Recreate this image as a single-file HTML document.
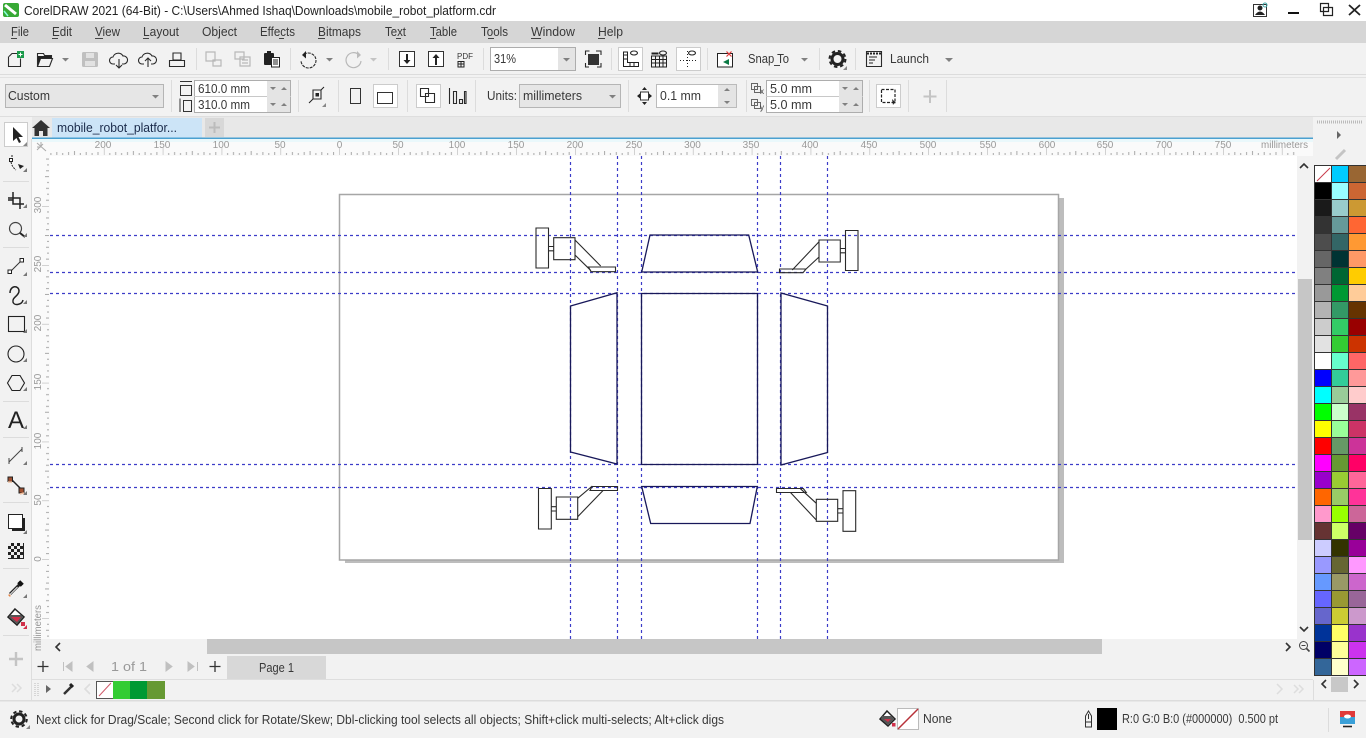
<!DOCTYPE html>
<html><head><meta charset="utf-8"><title>CorelDRAW 2021</title>
<style>
html,body{margin:0;padding:0;background:#f2f2f2;overflow:hidden}
svg{display:block}
text{font-family:"Liberation Sans",sans-serif;font-size:12.5px;fill:#383838}
.r{font-size:10px;fill:#999}
.l{fill:none;stroke:#2a2a2a;stroke-width:1.1}
.g{fill:none;stroke:#b8b8b8;stroke-width:1.2}
.d{fill:none;stroke:#2a2a2a;stroke-width:1.1}
.n{fill:none;stroke:#18185a;stroke-width:1.3}
.h{fill:none;stroke:#3c3cc8;stroke-width:1.2;stroke-dasharray:3 3}
.c{fill:#808080}
.ch{fill:none;stroke:#333;stroke-width:1.6}
.sep{stroke:#dcdcdc;stroke-width:1}
</style></head><body>
<svg width="1366" height="738" viewBox="0 0 1366 738" xmlns="http://www.w3.org/2000/svg">
<defs>
<pattern id="tt" x="339.5" y="139" width="58.9" height="17" patternUnits="userSpaceOnUse">
<path d="M0 9v7M5.900 14v2M11.800 13v3M17.700 14v2M23.600 13v3M29.500 12v4M35.300 14v2M41.200 13v3M47.100 14v2M53 13v3" stroke="#a8a8a8" stroke-width="1" fill="none"/>
</pattern>
<pattern id="lt" x="33" y="559.5" width="17" height="58.9" patternUnits="userSpaceOnUse">
<path d="M9 0h7M14 5.900h2M13 11.800h3M14 17.700h2M13 23.600h3M12 29.500h4M14 35.300h2M13 41.200h3M14 47.100h2M13 53h3" stroke="#a8a8a8" stroke-width="1" fill="none"/>
</pattern>
</defs>
<rect width="1366" height="738" fill="#f2f2f2"/>
<!-- title bar -->
<rect width="1366" height="21" fill="#fff"/>
<rect x="3" y="3" width="16" height="14" rx="2" fill="#37a935"/>
<path d="M5 5l11 9" stroke="#fff" stroke-width="3"/><path d="M4 11l4 5" stroke="#8fd" stroke-width="1.500"/>
<text x="24" y="15" textLength="472" lengthAdjust="spacingAndGlyphs" style="fill:#222">CorelDRAW 2021 (64-Bit) - C:\Users\Ahmed Ishaq\Downloads\mobile_robot_platform.cdr</text>
<rect x="1253.500" y="4.500" width="13" height="12" fill="none" stroke="#333"/><circle cx="1260" cy="8" r="2.500" fill="#222"/><path d="M1255 15q5-7 10 0z" fill="#222"/><circle cx="1265" cy="5" r="2" fill="none" stroke="#4aa"/>
<rect x="1288" y="12" width="11" height="2" fill="#111"/>
<path d="M1320.500 3.500h8v8h-8zM1323.500 7.500h9v8h-9z" fill="#fff" stroke="#222" stroke-width="1.200"/>
<path d="M1349 5l11 10M1360 5l-11 10" stroke="#222" stroke-width="1.800"/>
<!-- menu -->
<rect y="21" width="1366" height="22" fill="#d6d6d6"/>
<text x="11" y="36" textLength="18" lengthAdjust="spacingAndGlyphs">File</text><text x="52" y="36" textLength="20" lengthAdjust="spacingAndGlyphs">Edit</text><text x="95" y="36" textLength="25" lengthAdjust="spacingAndGlyphs">View</text><text x="143" y="36" textLength="36" lengthAdjust="spacingAndGlyphs">Layout</text><text x="202" y="36" textLength="35" lengthAdjust="spacingAndGlyphs">Object</text><text x="260" y="36" textLength="35" lengthAdjust="spacingAndGlyphs">Effects</text><text x="318" y="36" textLength="43" lengthAdjust="spacingAndGlyphs">Bitmaps</text><text x="385" y="36" textLength="21" lengthAdjust="spacingAndGlyphs">Text</text><text x="430" y="36" textLength="27" lengthAdjust="spacingAndGlyphs">Table</text><text x="481" y="36" textLength="27" lengthAdjust="spacingAndGlyphs">Tools</text><text x="531" y="36" textLength="44" lengthAdjust="spacingAndGlyphs">Window</text><text x="598" y="36" textLength="25" lengthAdjust="spacingAndGlyphs">Help</text>
<path d="M11 38.500h6M52 38.500h6M95 38.500h8M143 38.500h6M279 38.500h5M318 38.500h7M396 38.500h5M430 38.500h6M488 38.500h6M531 38.500h10M598 38.500h7" stroke="#444"/>
<!-- toolbar 1 -->
<rect y="74" width="1366" height="1" fill="#dcdcdc"/><rect y="77" width="1366" height="1" fill="#e2e2e2"/>
<path class="l" d="M9 56.500l3-3h7M8.500 56.500v10h12v-8"/><rect x="17" y="51" width="7" height="7" fill="#1a9a4a"/><path d="M20.500 52.500v4M18.500 54.500h4" stroke="#fff"/>
<path class="l" d="M37.500 66.500v-13h6l1 2h7v3M37.500 66.500h12l3-8h-12l-3 8z"/><path d="M38 56h13v2H41l-3 7z" fill="#222"/>
<path class="c" d="M62 58h7l-3.500 3.500z"/>
<rect x="82" y="52" width="16" height="15" rx="1.500" fill="#c0c0c0"/><rect x="86" y="53" width="8" height="5" fill="#e2e2e2"/><rect x="85" y="61" width="10" height="5" fill="#e2e2e2"/>
<path class="l" d="M115 64h-2a3.500 3.500 0 0 1 0-7 5.500 5.500 0 0 1 10-1 4 4 0 0 1 1 8h-2M119 59v9M116 65l3 3 3-3"/>
<path class="l" d="M144 64h-2a3.500 3.500 0 0 1 0-7 5.500 5.500 0 0 1 10-1 4 4 0 0 1 1 8h-2M148 67v-9M145 61l3-3 3 3"/>
<path class="l" d="M173 60v-7h8v7M169.500 66.500v-6h15v6z"/><path d="M173 60h8" stroke="#222"/>
<path class="sep" d="M196.500 48v22M290.500 48v22M388.500 48v22M483.500 48v22M611.500 48v22M707.500 48v22M819.500 48v22M855.500 48v22"/>
<path class="g" d="M206 52h9v9h-9zM213 60h8v6h-8z"/>
<path class="g" d="M235 52h9v7h-9zM240 57h10v9h-10zM242 60h6M242 63h6"/>
<rect x="264" y="53" width="10" height="12" rx="1" fill="#222"/><rect x="267" y="51" width="4" height="3" fill="#222"/><path d="M271.500 57.500h8v9.500h-8z" fill="#fff" stroke="#222"/><path d="M273 60h5M273 62h5M273 64h5" stroke="#222"/>
<path class="l" d="M304 54.500a7.500 7.500 0 1 1-3 6" stroke-dasharray="3 1"/><path d="M306 51l-4 4 4 3.500z" fill="#222"/>
<path class="c" d="M326 58h7l-3.500 3.500z"/>
<path class="g" d="M359 55a7.500 7.500 0 1 0 2 6"/><path d="M357 51l4 4-4 3.500z" fill="#bbb"/>
<path d="M370 58h7l-3.500 3.500z" fill="#c4c4c4"/>
<rect x="399.500" y="51.500" width="15" height="15" fill="#fff" stroke="#333"/><path d="M407 54v8" stroke="#222" stroke-width="2"/><path d="M403.500 60h7l-3.500 4z" fill="#222"/>
<rect x="428.500" y="51.500" width="15" height="15" fill="#fff" stroke="#333"/><path d="M436 57v8" stroke="#222" stroke-width="2"/><path d="M432.500 58h7l-3.500-4z" fill="#222"/>
<text x="457" y="59" textLength="16" lengthAdjust="spacingAndGlyphs" style="font-size:8.500px">PDF</text><path d="M458 61.500h6v5.500h-6zM461 61.500v5.500M458 64h6" stroke="#222" fill="none"/>
<rect x="490.500" y="47.500" width="85" height="23" fill="#fff" stroke="#adadad"/><rect x="558" y="48" width="17" height="22" fill="#e4e4e4"/>
<text x="494" y="63" textLength="22" lengthAdjust="spacingAndGlyphs">31%</text><path class="c" d="M563 58h7l-3.500 3.500z"/>
<rect x="588" y="54" width="11" height="11" fill="#333"/><path class="d" d="M585.500 55v-4h4M596 51h5v4M601 63v4h-4M589 67h-3.500v-4"/>
<rect x="618.500" y="47.500" width="24" height="23" fill="#fff" stroke="#ccc"/><path d="M623.500 52v14.500h15v-4h-11V52zM624 59h3M624 55h3M630 63v3M634 63v3" fill="none" stroke="#222"/><ellipse cx="634" cy="53" rx="3.500" ry="2" class="d"/>
<path d="M651.500 56h15v11h-15zM655.500 56v11M659.500 56v11M663 56v11M651.500 59.500h15M651.500 63h15" fill="none" stroke="#222"/><ellipse cx="663" cy="53" rx="3.500" ry="2" class="d"/><path d="M651.500 53.500h7" stroke="#222" stroke-width="2"/>
<rect x="676.500" y="47.500" width="24" height="23" fill="#fff" stroke="#ccc"/><path d="M680 60.500h17M687.500 51v17" stroke="#222" stroke-dasharray="1 2"/><ellipse cx="692" cy="53" rx="3.500" ry="2" class="d"/>
<path d="M717.500 53.500h15v13.500h-15z" fill="#fff" stroke="#222"/><path d="M729 59l-6 3 6 3z" fill="#0c7a45"/><path d="M726.500 51.500l5 5M731.500 51.500l-5 5" stroke="#e03c3c" stroke-width="1.200"/>
<text x="748" y="63" textLength="41" lengthAdjust="spacingAndGlyphs">Snap To</text><path d="M774 65.500h6" stroke="#444"/>
<path class="c" d="M801 58h7l-3.500 3.500z"/>
<circle cx="837.500" cy="59" r="5.500" fill="none" stroke="#222" stroke-width="3"/><circle cx="837.500" cy="59" r="8" fill="none" stroke="#222" stroke-width="2" stroke-dasharray="3.500 2.800"/><path d="M843 70l4-4v4z" fill="#888"/>
<path class="l" d="M866.500 51.500h15v15h-15z"/><path d="M867 53.500h14" stroke="#222" stroke-width="2" stroke-dasharray="2 1"/><path d="M869 57h8M869 60h6M869 63h4" stroke="#222"/>
<text x="890" y="63" textLength="39" lengthAdjust="spacingAndGlyphs">Launch</text>
<path class="c" d="M945 58h8l-4 4z"/>
<!-- toolbar 2 -->
<rect x="5.500" y="84.500" width="158" height="23" fill="#e6e6e6" stroke="#b5b5b5"/><text x="8" y="100" textLength="42" lengthAdjust="spacingAndGlyphs">Custom</text><path class="c" d="M152 95h7l-3.500 3.500z"/>
<path class="sep" d="M171.500 80v32M298.500 80v32M338.500 80v32M407.500 80v32M475.500 80v32M628.500 80v32M746.500 80v32M869.500 80v32M908.500 80v32M946.500 80v32"/>
<path d="M180 81.500h12M180.500 85.500h11v10h-11zM180 98.500v13.500M183.500 100.500h8v11h-8z" fill="none" stroke="#333"/>
<rect x="194.500" y="80.500" width="96" height="32" fill="#fff" stroke="#adadad"/><path d="M194 96.500h97" stroke="#c8c8c8"/><rect x="267" y="81" width="23" height="31" fill="#e4e4e4"/>
<text x="198" y="93" textLength="52" lengthAdjust="spacingAndGlyphs">610.0 mm</text><text x="198" y="109" textLength="52" lengthAdjust="spacingAndGlyphs">310.0 mm</text>
<path class="c" d="M270 87h6l-3 3zM281 90h6l-3-3zM270 103h6l-3 3zM281 106h6l-3-3z"/>
<path class="l" d="M313 90h8v9h-8z"/><rect x="315.500" y="93" width="3.500" height="3.500" fill="#222"/><path d="M309 103l4-4M321 90l3-3" stroke="#222"/><path d="M322 107l4-4v4z" fill="#888"/>
<rect x="350.500" y="88.500" width="10" height="15" fill="none" stroke="#333"/>
<rect x="373.500" y="84.500" width="24" height="23" fill="#fff" stroke="#ccc"/><rect x="377.500" y="92.500" width="15" height="11" fill="none" stroke="#333"/>
<rect x="416.500" y="84.500" width="24" height="23" fill="#fff" stroke="#ccc"/><path class="d" d="M420.500 88.500h8v8h-8zM425.500 93.500h9v9h-9z"/>
<path class="d" d="M449.500 88v16M453.500 91.500h3v12h-3zM459.500 99.500h3v4h-3zM464.500 91.500h1.500v12h-1.500z"/>
<text x="487" y="100" textLength="30" lengthAdjust="spacingAndGlyphs">Units:</text>
<rect x="519.500" y="84.500" width="101" height="23" fill="#e6e6e6" stroke="#b5b5b5"/><text x="523" y="100" textLength="59" lengthAdjust="spacingAndGlyphs">millimeters</text><path class="c" d="M609 95h7l-3.500 3.500z"/>
<rect x="640.500" y="92" width="8" height="8" fill="#fff" stroke="#333"/><path d="M644.500 87l2.500 3h-5zM644.500 105l2.500-3h-5zM637 96l3-2.500v5zM652 96l-3-2.500v5z" fill="#222"/>
<rect x="656.500" y="84.500" width="80" height="23" fill="#fff" stroke="#bbb"/><rect x="718" y="85" width="18" height="22" fill="#e4e4e4"/>
<text x="660" y="100" textLength="41" lengthAdjust="spacingAndGlyphs">0.1 mm</text><path class="c" d="M724 91h6l-3-3zM724 101h6l-3 3z"/>
<path d="M751.500 83.500h6v6h-6zM754.500 86.500h6v6h-6zM751.500 99.500h6v6h-6zM754.500 102.500h6v6h-6z" fill="none" stroke="#666"/><text x="760" y="94" style="font-size:8px">x</text><text x="760" y="110" style="font-size:8px">y</text>
<rect x="766.500" y="80.500" width="96" height="32" fill="#fff" stroke="#adadad"/><path d="M766 96.500h97" stroke="#c8c8c8"/><rect x="839" y="81" width="23" height="31" fill="#e4e4e4"/>
<text x="770" y="93" textLength="42" lengthAdjust="spacingAndGlyphs">5.0 mm</text><text x="770" y="109" textLength="42" lengthAdjust="spacingAndGlyphs">5.0 mm</text>
<path class="c" d="M842 87h6l-3 3zM853 90h6l-3-3zM842 103h6l-3 3zM853 106h6l-3-3z"/>
<rect x="876.500" y="84.500" width="24" height="23" fill="#fff" stroke="#ccc"/><path d="M881.500 89.500h13.500v13h-13.500z" fill="none" stroke="#222" stroke-dasharray="3 1.500" stroke-width="1.200"/><path d="M892 99l4 4-2 .5-1 1.500z" fill="#222"/>
<path d="M930 90v13M923.500 96.500h13" stroke="#c4c4c4" stroke-width="2"/>
<!-- tabs -->
<rect x="32" y="117" width="1281" height="21" fill="#e8e8e8"/>
<rect x="0" y="116" width="1366" height="1" fill="#dedede"/>
<rect x="52" y="118" width="150" height="20" fill="#cce4f7"/>
<path d="M41 120l-9 8h2.500v8h4.500v-5h4v5h4.500v-8h2.500z" fill="#333"/>
<text x="57" y="132" textLength="120" lengthAdjust="spacingAndGlyphs" style="fill:#1a2a4a">mobile_robot_platfor...</text>
<rect x="205" y="118" width="19" height="19" fill="#d8d8d8"/><path d="M214.500 122v11M209 127.500h11" stroke="#bcbcbc" stroke-width="2"/>
<rect x="32" y="137.500" width="1281" height="1.500" fill="#4aa0d0"/>
<!-- rulers -->
<rect x="32" y="139" width="1281" height="17" fill="#fafafa"/>
<rect x="32" y="139" width="1281" height="3" fill="#eaf8fb"/>
<rect x="32" y="156" width="18" height="483" fill="#fafafa"/>
<rect x="50" y="139" width="1247" height="17" fill="url(#tt)"/>
<rect x="33" y="156" width="17" height="483" fill="url(#lt)"/>
<path d="M37 143l9 8M37 150l6-6M41 142v4M37 147h4" stroke="#aaa" fill="none"/>
<text class="r" text-anchor="middle" x="103" y="148">200</text><text class="r" text-anchor="middle" x="162" y="148">150</text><text class="r" text-anchor="middle" x="221" y="148">100</text><text class="r" text-anchor="middle" x="280" y="148">50</text><text class="r" text-anchor="middle" x="339.500" y="148">0</text><text class="r" text-anchor="middle" x="398" y="148">50</text><text class="r" text-anchor="middle" x="457" y="148">100</text><text class="r" text-anchor="middle" x="516" y="148">150</text><text class="r" text-anchor="middle" x="575" y="148">200</text><text class="r" text-anchor="middle" x="634" y="148">250</text><text class="r" text-anchor="middle" x="692.500" y="148">300</text><text class="r" text-anchor="middle" x="751" y="148">350</text><text class="r" text-anchor="middle" x="810" y="148">400</text><text class="r" text-anchor="middle" x="869" y="148">450</text><text class="r" text-anchor="middle" x="928" y="148">500</text><text class="r" text-anchor="middle" x="988" y="148">550</text><text class="r" text-anchor="middle" x="1047" y="148">600</text><text class="r" text-anchor="middle" x="1105" y="148">650</text><text class="r" text-anchor="middle" x="1164" y="148">700</text><text class="r" text-anchor="middle" x="1223" y="148">750</text>
<text class="r" x="1261" y="148" textLength="47" lengthAdjust="spacingAndGlyphs">millimeters</text>
<text class="r" text-anchor="middle" transform="translate(41 205) rotate(-90)">300</text><text class="r" text-anchor="middle" transform="translate(41 264) rotate(-90)">250</text><text class="r" text-anchor="middle" transform="translate(41 323) rotate(-90)">200</text><text class="r" text-anchor="middle" transform="translate(41 382) rotate(-90)">150</text><text class="r" text-anchor="middle" transform="translate(41 441) rotate(-90)">100</text><text class="r" text-anchor="middle" transform="translate(41 500) rotate(-90)">50</text><text class="r" text-anchor="middle" transform="translate(41 559) rotate(-90)">0</text>
<text class="r" textLength="46" lengthAdjust="spacingAndGlyphs" transform="translate(41 651) rotate(-90)">millimeters</text>
<!-- canvas -->
<rect x="50" y="156" width="1247" height="483" fill="#fff"/>
<rect x="345" y="198" width="719" height="365" fill="#bdbdbd"/>
<rect x="339.500" y="194.500" width="719" height="365.500" fill="#fff" stroke="#a6a6a6" stroke-width="1.500"/>
<!-- guides -->
<path class="h" d="M570.500 156v483M617.500 156v483M641.500 156v483M757.500 156v483M780.500 156v483M827.500 156v483"/>
<path class="h" d="M50 235.500h1247M50 272.500h1247M50 293.500h1247M50 464.500h1247M50 487.500h1247"/>
<!-- drawing -->
<path class="n" d="M641.500 293.500h116v171h-116z"/>
<path class="n" d="M570.500 306L617 292.700V464L570.500 452z"/>
<path class="n" d="M781 293l46.500 13v146.500L781 465z"/>
<path class="n" d="M650 235h98.700l9 37H641.700z"/>
<path class="n" d="M641.700 486.500h115.600l-7.300 37H650.700z"/>
<path class="d" d="M536 228h12.500v40H536zM548.500 246.500h5.200v4.300h-5.200zM553.700 237.700H575v22h-21.300zM575 240l25.700 26M575 255l16 15.700M588.500 267H615.500v4.700H591z"/>
<path class="d" d="M845.500 230.500H858v40h-12.500zM840.300 248.500h5.200v4.300h-5.200zM819 240h21.300v22H819zM819 241.700L792.300 270M819 257L805 270M779.500 269H806l-3 3.700h-23.500z"/>
<path class="d" d="M538.500 488.500h12.800v40.500h-12.800zM551.300 506.700h5v4.300h-5zM556.300 497h21.400v22.300h-21.400zM577.700 498.300L592.300 486M577.700 516.700L603.300 490.300M592 486.500h25.500v4H590z"/>
<path class="d" d="M843 490.700h12.700v40.600H843zM837.700 508.700H843v4.300h-5.300zM816.300 499.300h21.400v22h-21.400zM816.300 503.300L800 488.300M816.300 520L790.700 492.700M776.500 488.500h26.800l3 4h-29.800z"/>
<!-- scrollbars -->
<rect x="1297" y="156" width="16" height="498" fill="#f2f2f2"/>
<rect x="1298" y="279" width="14" height="261" fill="#c6c6c6"/>
<path class="ch" d="M1300 627l4 4 4-4"/>
<rect x="50" y="639" width="1263" height="16" fill="#f2f2f2"/>
<rect x="207" y="639" width="895" height="15" fill="#c6c6c6"/>
<path class="ch" d="M60 643l-4 4 4 4M1286 643l4 4-4 4"/>
<circle cx="1303.500" cy="645.500" r="4" fill="none" stroke="#444"/><path d="M1306.500 648.500l3 3" stroke="#444" stroke-width="1.600"/><path d="M1301.500 645.500h4" stroke="#444"/>
<!-- palette area -->
<rect x="1313" y="117" width="53" height="49" fill="#f2f2f2"/>
<path d="M1317 122h46" stroke="#bbb" stroke-width="3" stroke-dasharray="1 1"/>
<path d="M1337 131l4 4-4 4z" fill="#666"/>
<path d="M1336 159l9-9" stroke="#c4c4c4" stroke-width="3"/>
<path class="ch" d="M1300 168l4-4 4 4"/>
<g stroke="#333" stroke-width="1">
<rect x="1314.500" y="165.500" width="17" height="17" fill="#fff"/><path d="M1317 181l13-13" stroke="#c83a4a"/>
<rect x="1314.500" y="182.500" width="17" height="17" fill="#000"/><rect x="1314.500" y="199.500" width="17" height="17" fill="#1a1a1a"/><rect x="1314.500" y="216.500" width="17" height="17" fill="#333"/><rect x="1314.500" y="233.500" width="17" height="17" fill="#4d4d4d"/><rect x="1314.500" y="250.500" width="17" height="17" fill="#666"/><rect x="1314.500" y="267.500" width="17" height="17" fill="#808080"/><rect x="1314.500" y="284.500" width="17" height="17" fill="#999"/><rect x="1314.500" y="301.500" width="17" height="17" fill="#b3b3b3"/><rect x="1314.500" y="318.500" width="17" height="17" fill="#ccc"/><rect x="1314.500" y="335.500" width="17" height="17" fill="#e2e2e2"/><rect x="1314.500" y="352.500" width="17" height="17" fill="#fff"/><rect x="1314.500" y="369.500" width="17" height="17" fill="#00f"/><rect x="1314.500" y="386.500" width="17" height="17" fill="#0ff"/><rect x="1314.500" y="403.500" width="17" height="17" fill="#0f0"/><rect x="1314.500" y="420.500" width="17" height="17" fill="#ff0"/><rect x="1314.500" y="437.500" width="17" height="17" fill="#f00"/><rect x="1314.500" y="454.500" width="17" height="17" fill="#f0f"/><rect x="1314.500" y="471.500" width="17" height="17" fill="#90c"/><rect x="1314.500" y="488.500" width="17" height="17" fill="#f60"/><rect x="1314.500" y="505.500" width="17" height="17" fill="#f9c"/><rect x="1314.500" y="522.500" width="17" height="17" fill="#633"/><rect x="1314.500" y="539.500" width="17" height="17" fill="#ccf"/><rect x="1314.500" y="556.500" width="17" height="17" fill="#99f"/><rect x="1314.500" y="573.500" width="17" height="17" fill="#69f"/><rect x="1314.500" y="590.500" width="17" height="17" fill="#66f"/><rect x="1314.500" y="607.500" width="17" height="17" fill="#66c"/><rect x="1314.500" y="624.500" width="17" height="17" fill="#039"/><rect x="1314.500" y="641.500" width="17" height="17" fill="#006"/><rect x="1314.500" y="658.500" width="17" height="17" fill="#369"/>
<rect x="1331.500" y="165.500" width="17" height="17" fill="#0cf"/><rect x="1331.500" y="182.500" width="17" height="17" fill="#9ff"/><rect x="1331.500" y="199.500" width="17" height="17" fill="#9cc"/><rect x="1331.500" y="216.500" width="17" height="17" fill="#699"/><rect x="1331.500" y="233.500" width="17" height="17" fill="#366"/><rect x="1331.500" y="250.500" width="17" height="17" fill="#033"/><rect x="1331.500" y="267.500" width="17" height="17" fill="#063"/><rect x="1331.500" y="284.500" width="17" height="17" fill="#093"/><rect x="1331.500" y="301.500" width="17" height="17" fill="#396"/><rect x="1331.500" y="318.500" width="17" height="17" fill="#3c6"/><rect x="1331.500" y="335.500" width="17" height="17" fill="#3c3"/><rect x="1331.500" y="352.500" width="17" height="17" fill="#6fc"/><rect x="1331.500" y="369.500" width="17" height="17" fill="#3c9"/><rect x="1331.500" y="386.500" width="17" height="17" fill="#9c9"/><rect x="1331.500" y="403.500" width="17" height="17" fill="#cfc"/><rect x="1331.500" y="420.500" width="17" height="17" fill="#9f9"/><rect x="1331.500" y="437.500" width="17" height="17" fill="#696"/><rect x="1331.500" y="454.500" width="17" height="17" fill="#693"/><rect x="1331.500" y="471.500" width="17" height="17" fill="#9c3"/><rect x="1331.500" y="488.500" width="17" height="17" fill="#9c6"/><rect x="1331.500" y="505.500" width="17" height="17" fill="#9f0"/><rect x="1331.500" y="522.500" width="17" height="17" fill="#cf6"/><rect x="1331.500" y="539.500" width="17" height="17" fill="#330"/><rect x="1331.500" y="556.500" width="17" height="17" fill="#663"/><rect x="1331.500" y="573.500" width="17" height="17" fill="#996"/><rect x="1331.500" y="590.500" width="17" height="17" fill="#993"/><rect x="1331.500" y="607.500" width="17" height="17" fill="#cc3"/><rect x="1331.500" y="624.500" width="17" height="17" fill="#ff6"/><rect x="1331.500" y="641.500" width="17" height="17" fill="#ff9"/><rect x="1331.500" y="658.500" width="17" height="17" fill="#ffc"/>
<rect x="1348.500" y="165.500" width="18" height="17" fill="#963"/><rect x="1348.500" y="182.500" width="18" height="17" fill="#c63"/><rect x="1348.500" y="199.500" width="18" height="17" fill="#c93"/><rect x="1348.500" y="216.500" width="18" height="17" fill="#f63"/><rect x="1348.500" y="233.500" width="18" height="17" fill="#f93"/><rect x="1348.500" y="250.500" width="18" height="17" fill="#f96"/><rect x="1348.500" y="267.500" width="18" height="17" fill="#fc0"/><rect x="1348.500" y="284.500" width="18" height="17" fill="#fc9"/><rect x="1348.500" y="301.500" width="18" height="17" fill="#630"/><rect x="1348.500" y="318.500" width="18" height="17" fill="#900"/><rect x="1348.500" y="335.500" width="18" height="17" fill="#c30"/><rect x="1348.500" y="352.500" width="18" height="17" fill="#f66"/><rect x="1348.500" y="369.500" width="18" height="17" fill="#f99"/><rect x="1348.500" y="386.500" width="18" height="17" fill="#fcc"/><rect x="1348.500" y="403.500" width="18" height="17" fill="#936"/><rect x="1348.500" y="420.500" width="18" height="17" fill="#c36"/><rect x="1348.500" y="437.500" width="18" height="17" fill="#c39"/><rect x="1348.500" y="454.500" width="18" height="17" fill="#f06"/><rect x="1348.500" y="471.500" width="18" height="17" fill="#f69"/><rect x="1348.500" y="488.500" width="18" height="17" fill="#f39"/><rect x="1348.500" y="505.500" width="18" height="17" fill="#c69"/><rect x="1348.500" y="522.500" width="18" height="17" fill="#606"/><rect x="1348.500" y="539.500" width="18" height="17" fill="#909"/><rect x="1348.500" y="556.500" width="18" height="17" fill="#f9f"/><rect x="1348.500" y="573.500" width="18" height="17" fill="#c6c"/><rect x="1348.500" y="590.500" width="18" height="17" fill="#969"/><rect x="1348.500" y="607.500" width="18" height="17" fill="#c9c"/><rect x="1348.500" y="624.500" width="18" height="17" fill="#93c"/><rect x="1348.500" y="641.500" width="18" height="17" fill="#c3e"/><rect x="1348.500" y="658.500" width="18" height="17" fill="#c6f"/>
</g>
<!-- page nav -->
<rect x="32" y="655" width="1281" height="24" fill="#f2f2f2"/>
<path d="M43 661v11M37.500 666.500h11M215 661v11M209.500 666.500h11" stroke="#333" stroke-width="1.300"/>
<path d="M63.500 662v9M72 662l-6 4.500 6 4.500zM93 662l-6 4.500 6 4.500zM166 662l6 4.500-6 4.500zM188 662l6 4.500-6 4.500zM197.500 662v9" fill="#c0c0c0" stroke="#c0c0c0"/>
<text x="111" y="671" textLength="36" lengthAdjust="spacingAndGlyphs" style="fill:#999">1 of 1</text>
<rect x="227" y="656" width="99" height="23" fill="#d8d8d8"/>
<text x="259" y="672" textLength="35" lengthAdjust="spacingAndGlyphs">Page 1</text>
<rect x="32" y="679" width="1281" height="1" fill="#dedede"/>
<!-- dock row -->
<path d="M35 683v14M38 683v14" stroke="#bbb" stroke-dasharray="1 1"/>
<path d="M46 685l5 4-5 4z" fill="#666"/>
<path d="M64 694l8-8" stroke="#333" stroke-width="2.500"/><path d="M70 684l3 3" stroke="#222" stroke-width="3"/>
<path d="M90 684l-5 5 5 5" fill="none" stroke="#ddd" stroke-width="1.600"/>
<rect x="96.500" y="681.500" width="17" height="17" fill="#fff" stroke="#555"/><path d="M99 696l12-13" stroke="#d05a6a"/>
<rect x="113" y="681" width="17" height="18" fill="#3c3"/><rect x="130" y="681" width="17" height="18" fill="#093"/><rect x="147" y="681" width="18" height="18" fill="#693"/>
<path d="M1277 684l5 5-5 5M1294 685l4 4-4 4M1299 685l4 4-4 4M12 684l4 4-4 4M17 684l4 4-4 4" fill="none" stroke="#ddd" stroke-width="1.500"/>
<path class="ch" d="M1326 680l-4 4 4 4M1354 680l4 4-4 4"/>
<rect x="1331" y="677" width="17" height="15" fill="#c8c8c8"/>
<path d="M1313.500 680v20" stroke="#ddd"/><path d="M31.500 139v561" stroke="#ddd"/>
<!-- left toolbox -->
<rect x="4.500" y="122.500" width="23" height="24" fill="#fff" stroke="#ccc"/>
<path d="M13 127v14l3.500-3 2.500 5 2-1-2.500-5h4.500z" fill="#222"/><path d="M23 146l4-4v4z" fill="#888"/>
<path d="M9.500 158.500h3v3h-3z" fill="#fff" stroke="#222"/><path d="M12 155v3M11 162q1 5 5 8" stroke="#222" fill="none" stroke-dasharray="2 1"/><path d="M18 164l6 2-4 3z" fill="#222"/>
<path d="M13 192v12h11M8 198h12v11M8 200h5M19 204h5" fill="none" stroke="#222" stroke-width="1.500"/>
<circle cx="15.500" cy="228.500" r="6" fill="none" stroke="#444" stroke-width="1.200"/><path d="M20 233l5 4" stroke="#222" stroke-width="2"/>
<path d="M10 272l11-11" stroke="#333"/><rect x="8" y="270" width="3.500" height="3.500" fill="#fff" stroke="#222"/><rect x="20" y="258.500" width="3.500" height="3.500" fill="#fff" stroke="#222"/>
<path d="M10 293c0-8 9-8 9-2 0 5-7 6-6 11 1 4 9 3 10-2" fill="none" stroke="#222" stroke-width="1.500"/>
<rect x="8.500" y="316.500" width="16" height="15" fill="none" stroke="#222" stroke-width="1.100"/>
<circle cx="16" cy="354" r="8" fill="none" stroke="#222" stroke-width="1.100"/>
<path d="M12 375.500h8l4.500 7.500-4.500 7.500h-8l-4.500-7.500z" fill="none" stroke="#222" stroke-width="1.100"/>
<text x="8" y="428" style="font-size:24px;fill:#222">A</text>
<path d="M9 462l13-13M9 458v6M22 447v5" stroke="#444" fill="none"/>
<path d="M10 478l12 12" stroke="#222" stroke-width="1.500"/><rect x="8" y="477" width="4.500" height="4.500" fill="#a05030" stroke="#222"/><rect x="19" y="488" width="5" height="5" fill="#a05030" stroke="#222"/><path d="M8 482l4 0M20 494l4-1" stroke="#f0c0a0" stroke-width="1.500"/>
<rect x="8.500" y="514.500" width="14" height="14" fill="#fff" stroke="#222"/><path d="M23 518v11H12v2h13v-13z" fill="#222"/>
<rect x="8" y="543" width="16" height="16" fill="#222"/><path d="M8 543h3v3H8zM14 543h3v3h-3zM20 543h3v3h-3zM11 546h3v3h-3zM17 546h3v3h-3zM8 549h3v3H8zM14 549h3v3h-3zM20 549h3v3h-3zM11 552h3v3h-3zM17 552h3v3h-3zM8 555h3v3H8zM14 555h3v3h-3zM20 555h3v3h-3z" fill="#eee"/>
<path d="M10 594l10-10" stroke="#222" stroke-width="2.800"/><path d="M9.500 595l8-8" stroke="#eee" stroke-width="1"/><path d="M19 585l3-3" stroke="#111" stroke-width="5"/><path d="M10 595l-1 1" stroke="#e08040" stroke-width="2.500"/>
<path d="M15 609l9 8-7 8-9-8z" fill="#fff" stroke="#222" stroke-width="1.500"/><path d="M10 615h11l2 2-6 7-8-7z" fill="#555"/><path d="M11 617h10l-4 5z" fill="#d0304a"/><rect x="21" y="622" width="4" height="4" fill="#d0304a"/>
<path d="M16 652v14M9 659h14" stroke="#c4c4c4" stroke-width="2.400"/>
<path fill="#777" d="M23 172l4-4v4zM23 208l4-4v4zM23 237l4-4v4zM23 276l4-4v4zM23 304l4-4v4zM23 333l4-4v4zM23 362l4-4v4zM23 391l4-4v4zM23 429l4-4v4zM23 465l4-4v4zM23 495l4-4v4zM23 534l4-4v4zM23 598l4-4v4z"/>
<path d="M23 629l4-4v4z" fill="#d0304a"/>
<path class="sep" d="M3 181.500h26M3 247.500h26M3 401.500h26M3 437.500h26M3 502.500h26M3 568.500h26M3 635.500h26" stroke="#d8d8d8"/>
<!-- status bar -->
<rect y="700" width="1366" height="1.500" fill="#dcdcdc"/>
<rect y="701.500" width="1366" height="36.500" fill="#f2f2f2"/>
<circle cx="19" cy="719" r="5" fill="none" stroke="#222" stroke-width="3"/><circle cx="19" cy="719" r="7.800" fill="none" stroke="#222" stroke-width="2" stroke-dasharray="3.400 2.700"/><path d="M26 729l4-4v4z" fill="#888"/>
<text x="36" y="724" textLength="688" lengthAdjust="spacingAndGlyphs">Next click for Drag/Scale; Second click for Rotate/Skew; Dbl-clicking tool selects all objects; Shift+click multi-selects; Alt+click digs</text>
<path d="M887 711l8 8-7 7-8-7z" fill="#fff" stroke="#222" stroke-width="1.500"/><path d="M882 716h9l3 3-6 6-7-6z" fill="#555"/><path d="M884 719h7l-3 3z" fill="#d0304a"/><rect x="892" y="723" width="3.500" height="3.500" fill="#d0304a"/>
<rect x="897.500" y="708.500" width="21" height="21" fill="#fff" stroke="#bbb"/><path d="M898 729l20-20" stroke="#b8323a" stroke-width="1.500"/>
<text x="923" y="723" textLength="29" lengthAdjust="spacingAndGlyphs">None</text>
<path d="M1088.500 711l3 5v6h-6v-6zM1085.500 722h6v5h-6zM1088.500 714v5" fill="none" stroke="#333"/>
<rect x="1097" y="708" width="20" height="22" fill="#000"/>
<text x="1122" y="723" textLength="156" lengthAdjust="spacingAndGlyphs" xml:space="preserve">R:0 G:0 B:0 (#000000)  0.500 pt</text>
<path class="sep" d="M1328.500 708v24"/>
<rect x="1340" y="711" width="15" height="13" fill="#e03a3a"/><rect x="1340" y="717" width="15" height="7" fill="#3aa0d8"/><ellipse cx="1347.500" cy="716.500" rx="3.500" ry="2" fill="#fff"/><path d="M1343 726.500h9" stroke="#222" stroke-width="1.600"/>
</svg>
</body></html>
